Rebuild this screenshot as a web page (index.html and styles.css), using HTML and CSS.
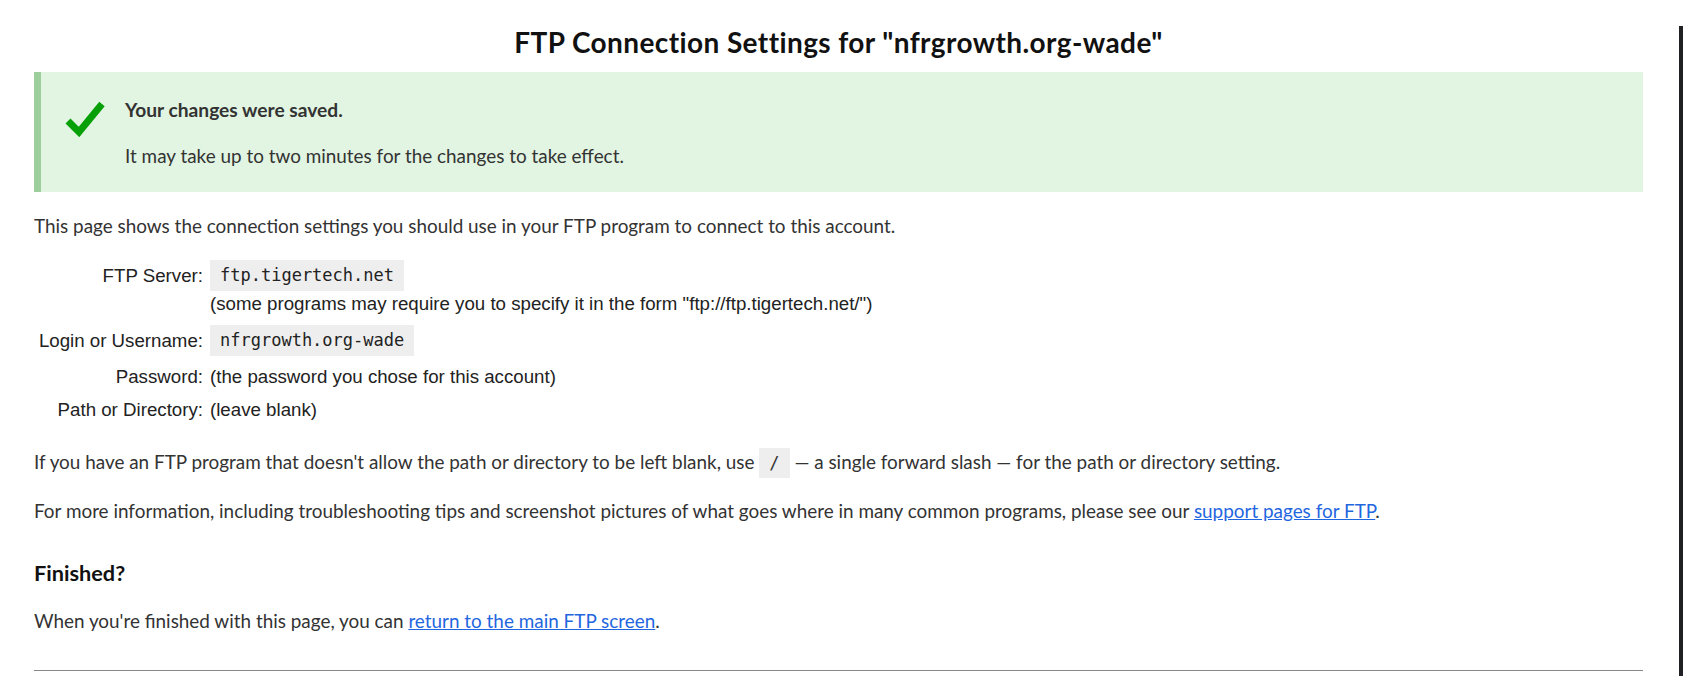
FILE: index.html
```html
<!DOCTYPE html>
<html lang="en">
<head>
<meta charset="utf-8">
<title>FTP Connection Settings</title>
<link rel="stylesheet" href="styles.css">
</head>
<body>
<div class="window">
  <main class="page">
    <h1 class="title">FTP Connection Settings for "nfrgrowth.org-wade"</h1>

    <div class="alert">
      <svg class="alert-icon" viewBox="0 0 40 36" width="40" height="36" aria-hidden="true">
        <polyline points="3,20 14,31 37,3" fill="none" stroke="#08a008" stroke-width="7" stroke-linejoin="miter" stroke-linecap="butt"/>
      </svg>
      <div class="alert-body">
        <p class="alert-title">Your changes were saved.</p>
        <p class="alert-text">It may take up to two minutes for the changes to take effect.</p>
      </div>
    </div>

    <p class="intro">This page shows the connection settings you should use in your FTP program to connect to this account.</p>

    <div class="settings">
      <div class="label tall">FTP Server:</div>
      <div class="value">
        <code class="code-box">ftp.tigertech.net</code>
        <div class="note">(some programs may require you to specify it in the form "ftp://ftp.tigertech.net/")</div>
      </div>
      <div class="label tall">Login or Username:</div>
      <div class="value"><code class="code-box">nfrgrowth.org-wade</code></div>
      <div class="label">Password:</div>
      <div class="value">(the password you chose for this account)</div>
      <div class="label">Path or Directory:</div>
      <div class="value">(leave blank)</div>
    </div>

    <p class="text blank-note">If you have an FTP program that doesn't allow the path or directory to be left blank, use <code class="code-inline">/</code> — a single forward slash — for the path or directory setting.</p>

    <p class="text more">For more information, including troubleshooting tips and screenshot pictures of what goes where in many common programs, please see our <a href="#">support pages for FTP</a>.</p>

    <h2 class="subhead">Finished?</h2>

    <p class="text done">When you're finished with this page, you can <a href="#">return to the main FTP screen</a>.</p>

    <hr class="rule">
  </main>
</div>
</body>
</html>
```

FILE: styles.css
```css
html, body {
  margin: 0;
  height: 100%;
}

body {
  background: #ffffff;
  color: #333333;
  font-family: Lato, "Noto Sans", sans-serif;
  font-size: 18.9px;
  overflow: hidden;
}

.window {
  height: 100%;
  box-sizing: border-box;
  border-right: 4px solid #1f2124;
  border-bottom: 2px solid #cfcfcf;
}

.page {
  padding: 0 36px 0 34px;
}

.title {
  margin: 26px 0 14px;
  text-align: center;
  font-size: 28px;
  letter-spacing: 0.4px;
  line-height: 32px;
  font-weight: 700;
  color: #111111;
}

.alert {
  display: flex;
  align-items: flex-start;
  height: 120px;
  box-sizing: border-box;
  background: #e2f5e2;
  border-left: 7px solid #9dcf9d;
  padding: 26px 24px 24px;
}

.alert-icon {
  flex: none;
  margin: 3px 20px 0 0;
}

.alert-body p {
  margin: 0;
  line-height: 24px;
}

.alert-title {
  font-weight: 700;
  font-size: 19.2px;
}

.alert-body .alert-text {
  margin-top: 22px;
}

.intro {
  margin: 22px 0 22px;
  line-height: 24px;
}

.settings {
  display: grid;
  grid-template-columns: 169px 1fr;
  column-gap: 7px;
  row-gap: 9px;
  align-items: start;
  font-family: "Liberation Sans", Arial, sans-serif;
  font-size: 18.7px;
  color: #222222;
}

.label {
  text-align: right;
  line-height: 24px;
}

.label.tall {
  line-height: 31px;
}

.value {
  line-height: 24px;
}

.code-box {
  display: inline-block;
  padding: 4px 10px;
  line-height: 23px;
  background: #eeeeee;
  font-family: "DejaVu Sans Mono", "Liberation Mono", monospace;
  font-size: 17px;
  color: #222222;
  vertical-align: top;
}

.note {
  line-height: 25px;
}

.text {
  margin: 0;
  line-height: 24px;
}

.blank-note {
  margin-top: 28px;
}

.code-inline {
  padding: 5px 10px;
  background: #eeeeee;
  font-family: "DejaVu Sans Mono", "Liberation Mono", monospace;
  font-size: 17px;
}

.more {
  margin-top: 24px;
}

a {
  color: #1f66e0;
  text-decoration: underline;
}

.subhead {
  margin: 36px 0 22px;
  font-size: 21.7px;
  line-height: 28px;
  font-weight: 700;
  color: #111111;
}

.done {
  margin-bottom: 37px;
}

.rule {
  margin: 0;
  border: 0;
  border-top: 1px solid #888888;
}
```
